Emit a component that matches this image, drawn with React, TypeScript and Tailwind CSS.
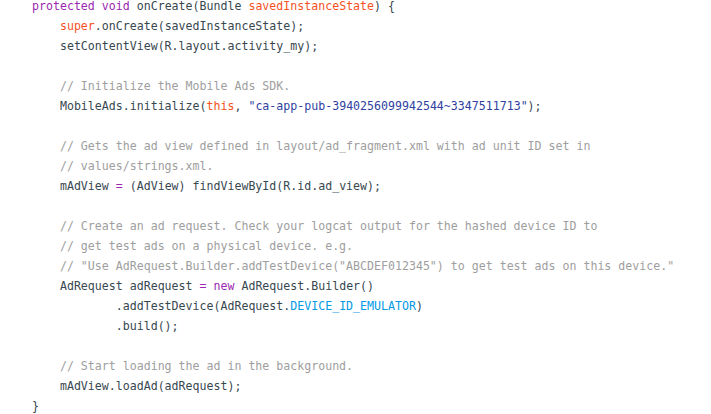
import React from "react";

const K = ({ children }: { children: React.ReactNode }) => <span className="text-[#9c27b0]">{children}</span>;
const P = ({ children }: { children: React.ReactNode }) => <span className="text-[#f4511e]">{children}</span>;
const C = ({ children }: { children: React.ReactNode }) => <span className="text-[#9e9e9e]">{children}</span>;
const S = ({ children }: { children: React.ReactNode }) => <span className="text-[#303f9f]">{children}</span>;
const B = ({ children }: { children: React.ReactNode }) => <span className="text-[#039be5]">{children}</span>;

export default function App() {
  return (
    <div className="bg-white w-[711px] h-[414px] overflow-hidden">
      <pre
        className="-mt-[4px] pl-8 text-[11.6px] leading-[20px] text-[#37474f] whitespace-pre"
        style={{ fontFamily: '"DejaVu Sans Mono", "Liberation Mono", monospace' }}
      >
        <div><K>protected</K> <K>void</K> onCreate(Bundle <P>savedInstanceState</P>) {"{"}</div>
        <div>    <P>super</P>.onCreate(savedInstanceState);</div>
        <div>    setContentView(R.layout.activity_my);</div>
        <div>{" "}</div>
        <div>    <C>// Initialize the Mobile Ads SDK.</C></div>
        <div>    MobileAds.initialize(<P>this</P>, <S>"ca-app-pub-3940256099942544~3347511713"</S>);</div>
        <div>{" "}</div>
        <div>    <C>// Gets the ad view defined in layout/ad_fragment.xml with ad unit ID set in</C></div>
        <div>    <C>// values/strings.xml.</C></div>
        <div>    mAdView <K>=</K> (AdView) findViewById(R.id.ad_view);</div>
        <div>{" "}</div>
        <div>    <C>// Create an ad request. Check your logcat output for the hashed device ID to</C></div>
        <div>    <C>// get test ads on a physical device. e.g.</C></div>
        <div>    <C>// "Use AdRequest.Builder.addTestDevice("ABCDEF012345") to get test ads on this device."</C></div>
        <div>    AdRequest adRequest <K>=</K> <K>new</K> AdRequest.Builder()</div>
        <div>            .addTestDevice(AdRequest.<B>DEVICE_ID_EMULATOR</B>)</div>
        <div>            .build();</div>
        <div>{" "}</div>
        <div>    <C>// Start loading the ad in the background.</C></div>
        <div>    mAdView.loadAd(adRequest);</div>
        <div>{"}"}</div>
      </pre>
    </div>
  );
}
